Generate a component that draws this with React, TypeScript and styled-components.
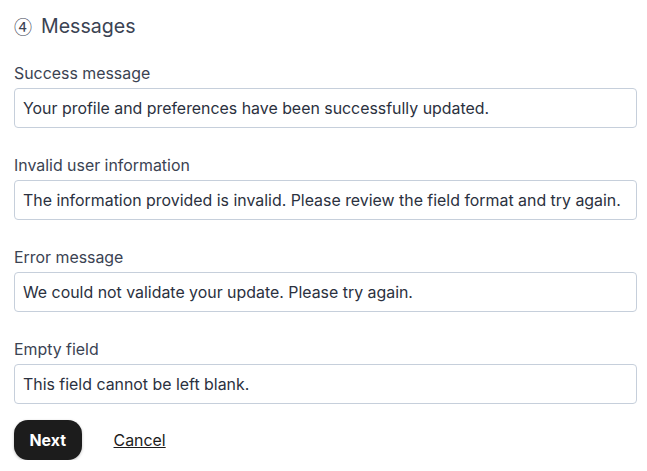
import React, { useState } from 'react'
import styled, { createGlobalStyle } from 'styled-components';

const GlobalStyle = createGlobalStyle`
  body {
    margin: 0;
    background: #fff;
    font-family: Inter, "Liberation Sans", sans-serif;
  }
`;

const fields = [
  { id: 'success', label: 'Success message', value: 'Your profile and preferences have been successfully updated.' },
  { id: 'invalid', label: 'Invalid user information', value: 'The information provided is invalid. Please review the field format and try again.' },
  { id: 'error', label: 'Error message', value: 'We could not validate your update. Please try again.' },
  { id: 'empty', label: 'Empty field', value: 'This field cannot be left blank.' },
];

const App = () => {
  const [values, setValues] = useState<Record<string, string>>(
    Object.fromEntries(fields.map((f) => [f.id, f.value]))
  );

  return (
    <>
      <GlobalStyle />
      <Page>
        <Heading>
          <StepNumber>④</StepNumber>
          Messages
        </Heading>
        {fields.map((f) => (
          <Field key={f.id}>
            <Label htmlFor={f.id}>{f.label}</Label>
            <Input
              id={f.id}
              value={values[f.id]}
              onChange={(e) => setValues({ ...values, [f.id]: e.target.value })}
            />
          </Field>
        ))}
        <Actions>
          <NextButton>Next</NextButton>
          <CancelLink href="#">Cancel</CancelLink>
        </Actions>
      </Page>
    </>
  )
}

const Page = styled.div`
  padding: 12px 10px 0 14px;
`;

const Heading = styled.h2`
  display: flex;
  align-items: center;
  margin: 0 0 24px;
  height: 28px;
  font-size: 19.6px;
  font-weight: 400;
  color: #3b4353;
`;

const StepNumber = styled.span`
  font-size: 18px;
  margin-right: 9px;
  font-family: "Noto Sans CJK SC", "DejaVu Sans", sans-serif;
`;

const Field = styled.div`
  display: flex;
  flex-direction: column;
  gap: 4px;
  margin-bottom: 28px;
  width: 623px;
`;

const Label = styled.label`
  font-size: 15.9px;
  line-height: 20px;
  color: #3b4353;
`;

const Input = styled.input`
  box-sizing: border-box;
  height: 40px;
  width: 100%;
  padding: 0 8px;
  border: 1px solid #c6cfdb;
  border-radius: 4px;
  font-family: inherit;
  font-size: 15.9px;
  color: #2b3140;
  outline: none;
`;

const Actions = styled.div`
  display: flex;
  align-items: center;
  gap: 32px;
  margin-top: -12px;
`;

const NextButton = styled.button`
  height: 40px;
  padding: 0 15.5px;
  border: none;
  border-radius: 14px;
  background: #1c1c1c;
  color: #fff;
  font-family: inherit;
  font-size: 15.9px;
  font-weight: 700;
  box-shadow: 0 1px 3px rgba(0, 0, 0, 0.25);
  cursor: pointer;
`;

const CancelLink = styled.a`
  font-size: 15.9px;
  color: #1c1c1c;
  text-decoration: underline;
`;

export default App
